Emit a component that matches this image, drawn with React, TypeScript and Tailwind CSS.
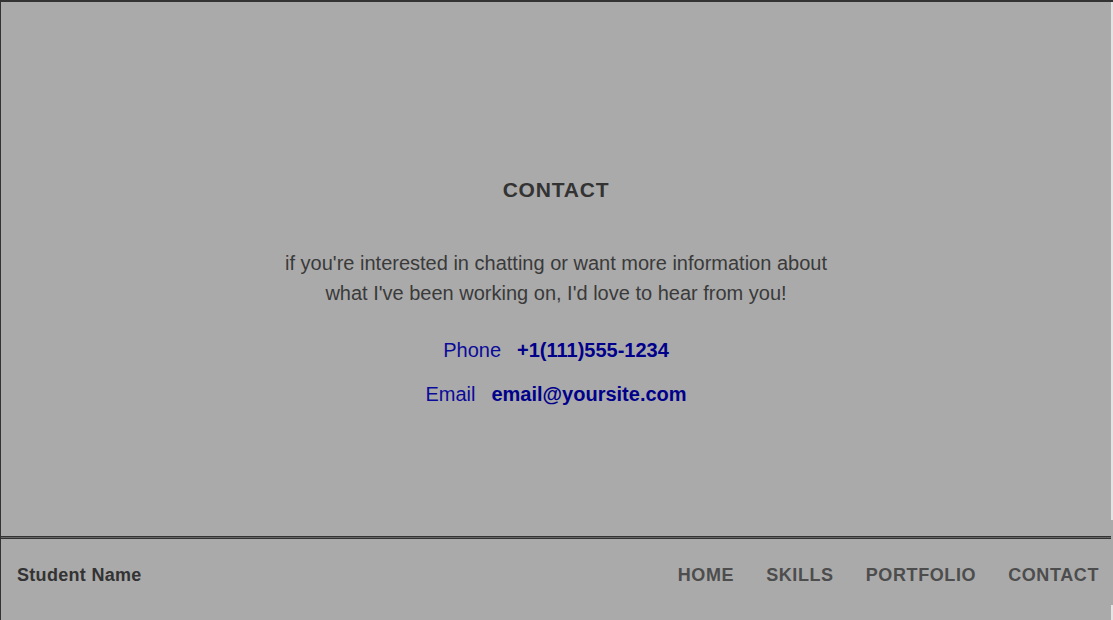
import React from "react";

export default function App() {
  const font = { fontFamily: '"Liberation Sans", Arial, Helvetica, sans-serif' };
  return (
    <div className="w-[1113px] h-[620px] flex overflow-hidden bg-[#aaaaaa]" style={font}>
      <div className="w-[1111px] h-[620px] flex flex-col border-l border-[#333333]">
        <section className="h-[536px] border-t-2 border-[#333333] flex flex-col items-center pt-[176px]">
          <h2 className="text-[21px] leading-[24px] font-bold tracking-[0.8px] text-[#333333]">CONTACT</h2>
          <p className="mt-[46px] text-[20px] leading-[30px] text-[#3a3a3a] text-center">
            if you're interested in chatting or want more information about
            <br />
            what I've been working on, I'd love to hear from you!
          </p>
          <div className="mt-[27px] flex items-center gap-[16px] text-[20px] leading-[30px] text-[#00008b]">
            <span className="text-[#0a0a9a]">Phone</span>
            <span className="font-bold">+1(111)555-1234</span>
          </div>
          <div className="mt-[14px] flex items-center gap-[16px] text-[20px] leading-[30px] text-[#00008b]">
            <span className="text-[#0a0a9a]">Email</span>
            <span className="font-bold">email@yoursite.com</span>
          </div>
        </section>
        <div className="h-[3px] w-[1110px] border-y border-[#333333] bg-[#666666]" />
        <footer className="flex-1 flex items-center justify-between pl-[16px] pr-[12px] pb-[8px]">
          <span className="text-[18px] font-bold tracking-[0.3px] text-[#333333]">Student Name</span>
          <nav className="flex items-center gap-[32px] text-[18px] font-bold tracking-[0.6px] text-[#4d4d4d]">
            <span>HOME</span>
            <span>SKILLS</span>
            <span>PORTFOLIO</span>
            <span>CONTACT</span>
          </nav>
        </footer>
      </div>
      <div className="w-[2px] h-[620px] flex flex-col">
        <div className="h-[2px] bg-[#333333]" />
        <div className="h-[518px] bg-[#e4e4e4]" />
        <div className="h-[85px] bg-[#aaaaaa]" />
        <div className="flex-1 bg-[#e4e4e4]" />
      </div>
    </div>
  );
}
